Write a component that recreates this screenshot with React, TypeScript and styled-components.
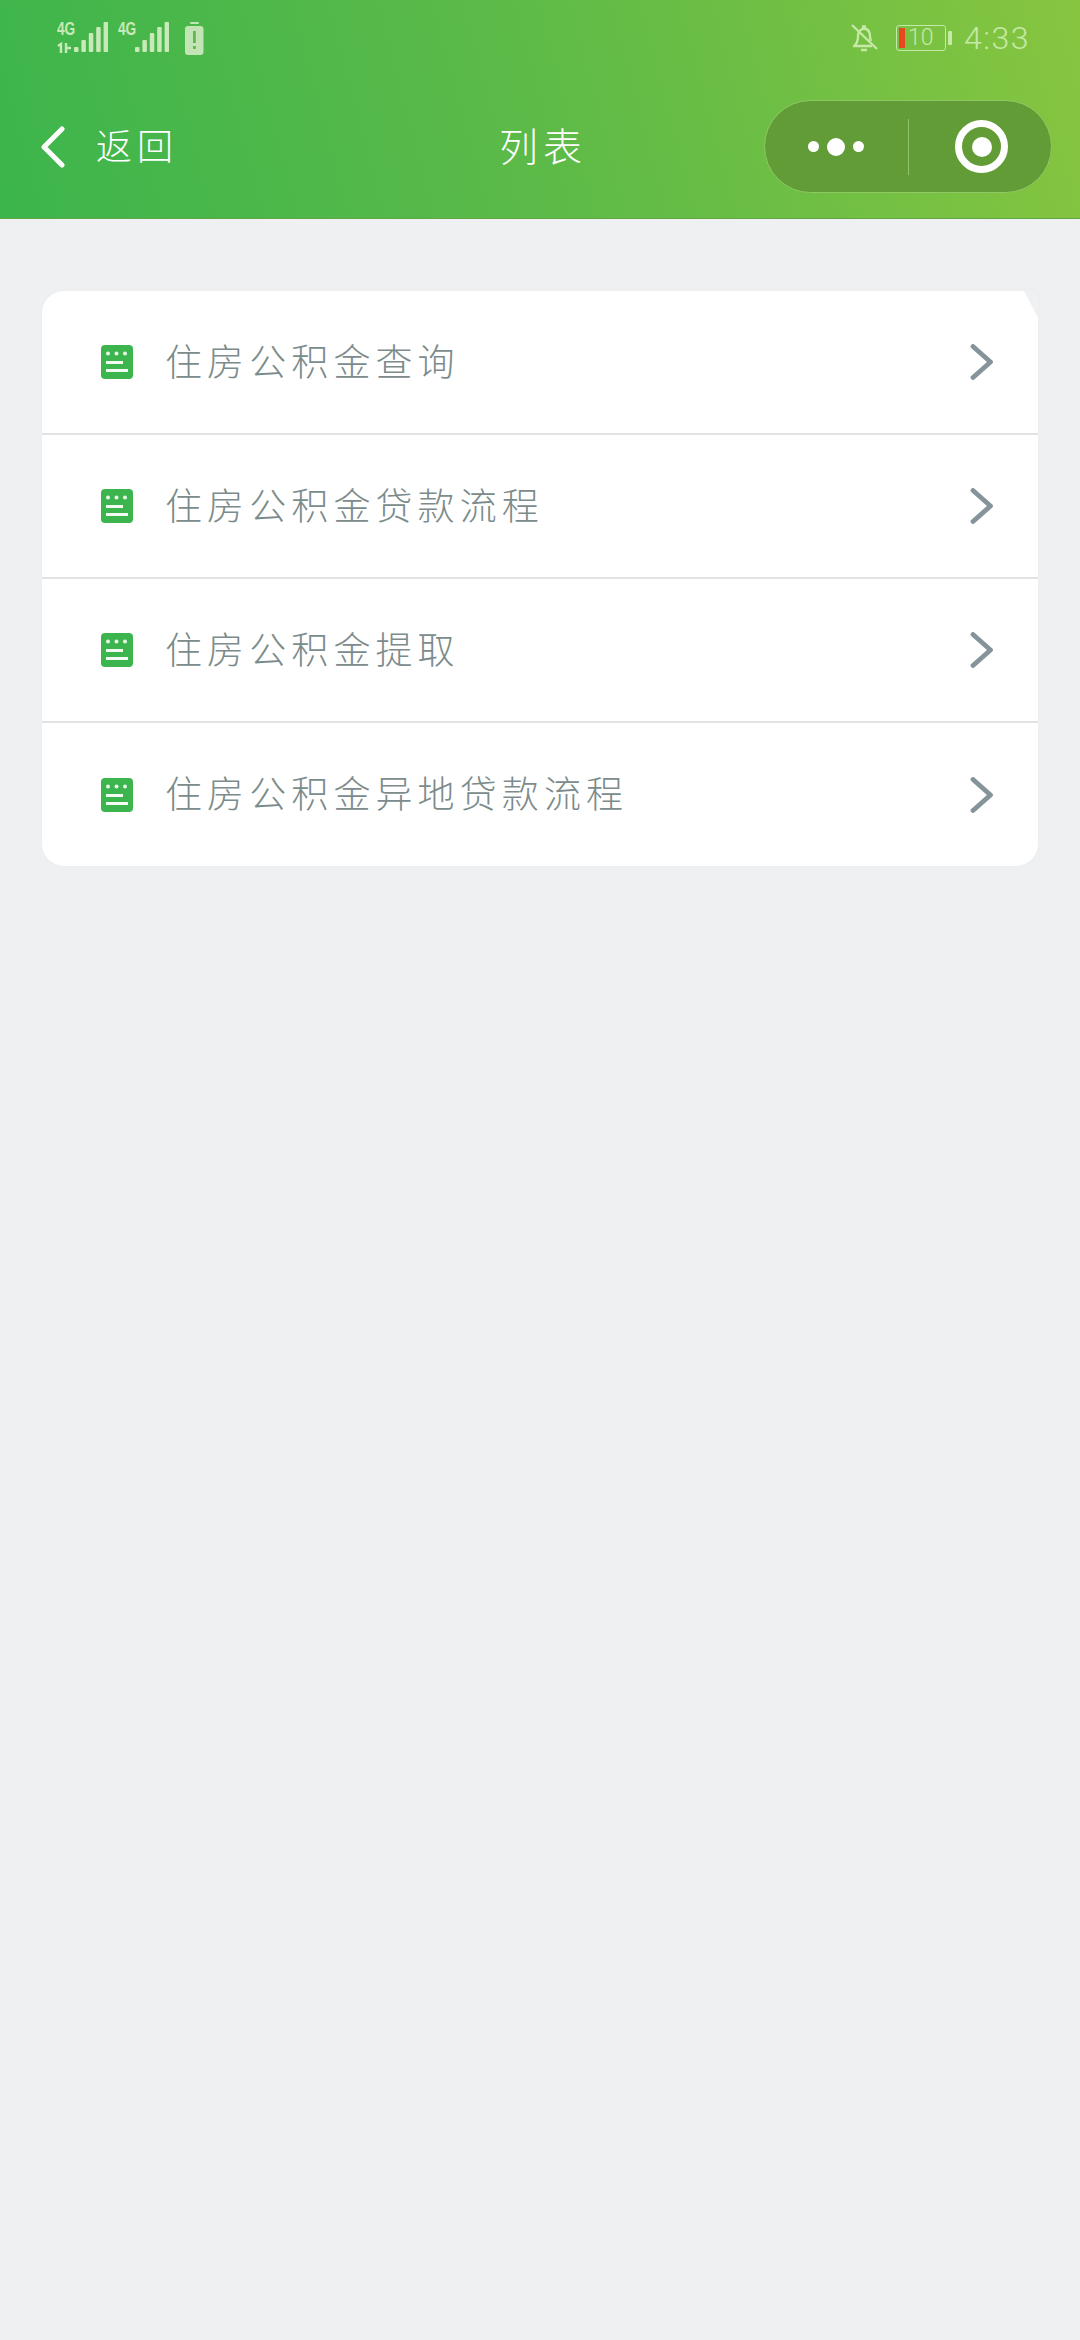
import React from 'react';
import styled, {createGlobalStyle} from 'styled-components';

const Global = createGlobalStyle`
    html, body {
        margin: 0;
        padding: 0;
        background: #eff0f2;
    }
    * {
        box-sizing: border-box;
    }
`;

const Page = styled.div`
    width: 1080px;
    height: 2340px;
    background: #eff0f2;
    font-family: "Noto Sans CJK SC", "Noto Sans", sans-serif;
    overflow: hidden;
`;

const Header = styled.header`
    height: 219px;
    background: linear-gradient(75deg, #3cb54c 0%, #5cba48 48%, #6fbf44 72%, #87c540 100%);
    border-bottom: 1px solid #62a744;
`;

const StatusBar = styled.div`
    height: 100px;
    padding: 20px 50px 0 57px;
    display: flex;
    align-items: flex-start;
    justify-content: space-between;
`;

const StatusGroup = styled.div`
    display: flex;
    align-items: center;
    gap: ${({$gap}: {$gap: number}) => $gap}px;
    height: 36px;
`;

const Signal = styled.div`
    position: relative;
    width: 51px;
    height: 34px;
`;

const NetLabel = styled.span`
    position: absolute;
    left: 0;
    top: -1px;
    font-family: "Liberation Sans", sans-serif;
    font-size: 18px;
    line-height: 18px;
    font-weight: 700;
    color: #c8e9b8;
    transform: scaleX(0.76);
    transform-origin: left center;
`;

const LowBattery = styled.div`
    display: flex;
    margin-left: 6px;
`;

const Muted = styled.div`
    display: flex;
    margin-right: 6px;
`;

const Time = styled.span`
    font-family: "Roboto", "Liberation Sans", sans-serif;
    font-weight: 300;
    font-size: 32px;
    line-height: 36px;
    letter-spacing: 1.5px;
    color: #c6e9a8;
`;

const BatteryBox = styled.div`
    width: 50px;
    height: 26px;
    border: 1.5px solid #c6e9a8;
    border-radius: 3px;
    display: flex;
    align-items: center;
    padding-left: 2px;
`;

const BatteryFill = styled.div`
    width: 6px;
    height: 20px;
    background: #e8481f;
`;

const BatteryText = styled.span`
    font-family: "Roboto", "Liberation Sans", sans-serif;
    font-weight: 300;
    font-size: 23px;
    line-height: 24px;
    color: #c6e9a8;
    margin-left: 3px;
`;

const BatteryNub = styled.div`
    width: 4px;
    height: 14px;
    margin-left: 2px;
    background: #c6e9a8;
    border-radius: 1px;
`;

const Battery = styled.div`
    display: flex;
    align-items: center;
`;

const NavBar = styled.div`
    height: 93px;
    padding: 0 28px 0 40px;
    display: grid;
    grid-template-columns: 1fr 288px;
    align-items: center;
    position: relative;
`;

const BackButton = styled.div`
    display: flex;
    align-items: center;
    gap: 30px;
`;

const NavText = styled.span`
    font-size: ${({$size}: {$size: number}) => $size}px;
    letter-spacing: 5px;
    color: #fff;
    font-weight: 300;
    line-height: 1;
    padding-bottom: 5px;
`;

const Title = styled(NavText)`
    position: absolute;
    left: 499px;
    top: 50%;
    transform: translateY(-50%);
`;

const Capsule = styled.div`
    height: 93px;
    border-radius: 47px;
    background: #629c36;
    border: 1.5px solid #8ec963;
    display: grid;
    grid-template-columns: 1fr 1px 1fr;
    align-items: center;
`;

const CapsuleCell = styled.div`
    display: flex;
    align-items: center;
    justify-content: center;
    gap: 8px;
`;

const CapsuleDivider = styled.div`
    width: 1px;
    height: 56px;
    background: #8fc26a;
`;

const Dot = styled.span`
    width: ${({$size}: {$size: number}) => $size}px;
    height: ${({$size}: {$size: number}) => $size}px;
    border-radius: 50%;
    background: #fff;
`;

const Ring = styled.div`
    width: 53px;
    height: 53px;
    border: 7px solid #fff;
    border-radius: 50%;
    display: flex;
    align-items: center;
    justify-content: center;
    margin-left: 4px;

    &::after {
        content: "";
        width: 20px;
        height: 20px;
        border-radius: 50%;
        background: #fff;
    }
`;

const List = styled.ul`
    position: relative;
    list-style: none;
    margin: 72px 0 0 42px;
    padding: 0;
    width: 996px;
    background: #fff;
    border-radius: 22px 0 22px 22px;
    box-shadow: 0 0 6px rgba(0, 0, 0, 0.025);

    /* clipped top right corner */
    &::before {
        content: "";
        position: absolute;
        top: 0;
        right: 0;
        width: 14px;
        height: 27px;
        background: #eff0f2;
        clip-path: polygon(0 0, 100% 0, 100% 100%);
    }
`;

const Row = styled.li`
    height: 144px;
    padding: 0 44px 0 59px;
    display: flex;
    align-items: center;
    border-bottom: 2px solid #e2e4e4;

    &:last-child {
        height: 143px;
        border-bottom: none;
    }
`;

const RowLabel = styled.span`
    flex: 1;
    margin-left: 32px;
    padding-bottom: 4px;
    font-size: 37px;
    line-height: 1;
    font-weight: 300;
    letter-spacing: 5.1px;
    color: #7c8b8b;
`;

function ArticleIcon() {
    return (
        <svg width="32" height="34" viewBox="0 0 32 34">
            <rect width="32" height="34" rx="4" fill="#3cb54f" />
            <circle cx="7" cy="8.5" r="2" fill="#e8f7e8" />
            <circle cx="15.5" cy="8.5" r="2" fill="#e8f7e8" />
            <circle cx="24" cy="8.5" r="2" fill="#e8f7e8" />
            <rect x="5" y="16" width="17" height="3" fill="#f3fbf3" />
            <rect x="5" y="24" width="22" height="3" fill="#f3fbf3" />
        </svg>
    );
}

function Chevron() {
    return (
        <svg width="24" height="36" viewBox="0 0 24 36">
            <path d="M3 2.5 L20.5 18 L3 33.5" fill="none" stroke="#84949a" strokeWidth="4.8" strokeLinecap="round" strokeLinejoin="round" />
        </svg>
    );
}

function BackArrow() {
    return (
        <svg width="26" height="42" viewBox="0 0 26 42">
            <path d="M22 3 L4 21 L22 39" fill="none" stroke="#fff" strokeWidth="5" strokeLinecap="round" strokeLinejoin="round" />
        </svg>
    );
}

function Bars({transfer}: {transfer: boolean}) {
    const heights = [5, 12, 19, 25, 30];
    return (
        <svg width="51" height="34" viewBox="0 0 51 34" style={{position: 'absolute', left: 0, top: 0}}>
            {transfer && <path d="M1 25l3-2v9M9 22v10M9 27h5" stroke="#c8e9b8" strokeWidth="2.4" fill="none" />}
            {heights.map((h, i) => (
                <rect key={i} x={17 + i * 7.4} y={31 - h} width="4.5" height={h} rx="1" fill="#c8e9b8" />
            ))}
        </svg>
    );
}

function WarningBattery() {
    return (
        <svg width="19" height="33" viewBox="0 0 19 33">
            <rect x="5" y="0" width="9" height="2" rx="1" fill="#c3e5b6" />
            <rect x="0" y="4" width="18.5" height="29" rx="3" fill="#c3e5b6" />
            <rect x="8" y="9" width="2.8" height="12" fill="#5fb94d" />
            <rect x="8" y="24" width="2.8" height="3" fill="#5fb94d" />
        </svg>
    );
}

function MutedBell() {
    return (
        <svg width="28" height="30" viewBox="0 0 28 30" fill="none" stroke="#c6e9a8" strokeWidth="2.4">
            <path d="M5 22c2-2 3-5 3-9 0-4 2.5-7 6-7.5M14 5.5c4 .5 6 3.5 6 7.5 0 2 .3 3.500 1 5M3 23h19M11 27h6M12 3.5h4" />
            <path d="M2 2 L27 26" />
        </svg>
    );
}

const items = ['住房公积金查询', '住房公积金贷款流程', '住房公积金提取', '住房公积金异地贷款流程'];

export default function App() {
    return (
        <Page>
            <Global />
            <Header>
                <StatusBar>
                    <StatusGroup $gap={10}>
                        <Signal>
                            <NetLabel>4G</NetLabel>
                            <Bars transfer />
                        </Signal>
                        <Signal>
                            <NetLabel>4G</NetLabel>
                            <Bars transfer={false} />
                        </Signal>
                        <LowBattery>
                            <WarningBattery />
                        </LowBattery>
                    </StatusGroup>
                    <StatusGroup $gap={12}>
                        <Muted>
                            <MutedBell />
                        </Muted>
                        <Battery>
                            <BatteryBox>
                                <BatteryFill />
                                <BatteryText>10</BatteryText>
                            </BatteryBox>
                            <BatteryNub />
                        </Battery>
                        <Time>4:33</Time>
                    </StatusGroup>
                </StatusBar>
                <NavBar>
                    <BackButton>
                        <BackArrow />
                        <NavText $size={36}>返回</NavText>
                    </BackButton>
                    <Title $size={39}>列表</Title>
                    <Capsule>
                        <CapsuleCell>
                            <Dot $size={11} />
                            <Dot $size={18} />
                            <Dot $size={11} />
                        </CapsuleCell>
                        <CapsuleDivider />
                        <CapsuleCell>
                            <Ring />
                        </CapsuleCell>
                    </Capsule>
                </NavBar>
            </Header>
            <List>
                {items.map((item) => (
                    <Row key={item}>
                        <ArticleIcon />
                        <RowLabel>{item}</RowLabel>
                        <Chevron />
                    </Row>
                ))}
            </List>
        </Page>
    );
}
